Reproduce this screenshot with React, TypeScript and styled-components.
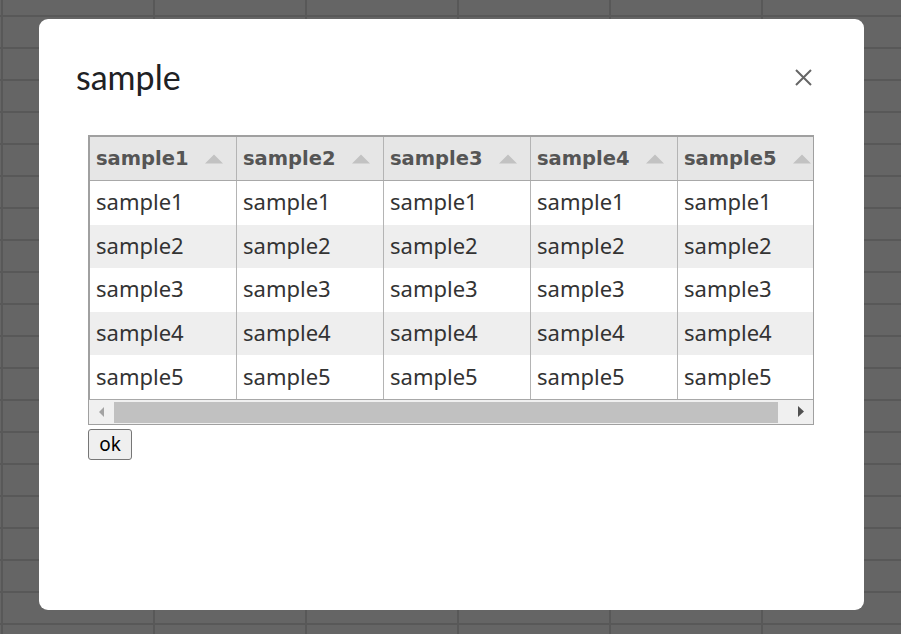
import React from "react";
import styled, { createGlobalStyle } from "styled-components";

const GlobalStyle = createGlobalStyle`
  html, body {
    margin: 0;
    padding: 0;
  }
  body {
    background-color: #656565;
    background-image:
      linear-gradient(to right, #585858 2px, transparent 2px),
      linear-gradient(to bottom, #585858 2px, transparent 2px);
    background-size: 152px 32px;
    background-position: 1px 15px;
    font-family: "Noto Sans", "DejaVu Sans", sans-serif;
  }
`;

const Page = styled.div`
  width: 901px;
  height: 634px;
  box-sizing: border-box;
  padding: 19px 0 0 39px;
`;

const Modal = styled.div`
  width: 825px;
  height: 591px;
  box-sizing: border-box;
  background: #ffffff;
  border-radius: 9px;
  display: flex;
  flex-direction: column;
`;

const Header = styled.div`
  display: flex;
  align-items: center;
  justify-content: space-between;
  padding: 38px 49px 0 37px;
`;

const Title = styled.h2`
  margin: 0;
  font-family: "Lato", "Open Sans", sans-serif;
  font-weight: 400;
  font-size: 34px;
  line-height: 40px;
  color: #202124;
`;

const CloseButton = styled.button`
  width: 24px;
  height: 24px;
  padding: 0;
  border: none;
  background: transparent;
  display: flex;
  align-items: center;
  justify-content: center;
  cursor: pointer;
`;

const Body = styled.div`
  padding: 38px 50px 0 49px;
  display: flex;
  flex-direction: column;
  align-items: flex-start;
`;

const Frame = styled.div`
  width: 100%;
  box-sizing: border-box;
  border: 1px solid #a0a0a0;
  display: flex;
  flex-direction: column;
`;

const Viewport = styled.div`
  overflow: hidden;
  border-bottom: 1px solid #a8a8a8;
`;

const Grid = styled.div`
  width: max-content;
  border-left: 1px solid #a0a0a0;
  border-top: 1px solid #a0a0a0;
`;

const Row = styled.div<{ $alt?: boolean }>`
  display: flex;
  height: 43.6px;
  background: ${(p) => (p.$alt ? "#eeeeee" : "#ffffff")};
`;

const HeadRow = styled.div`
  display: flex;
  height: 43px;
  background: #e6e6e6;
  border-bottom: 1px solid #a8a8a8;
`;

const HeadCell = styled.div`
  border-right: 1px solid #b4b4b4;
  display: flex;
  align-items: center;
  justify-content: space-between;
  padding: 0 13px 0 6px;
  box-sizing: content-box;
  width: 127px;
  font-family: "DejaVu Sans", sans-serif;
  font-weight: 700;
  font-size: 19.5px;
  color: #555555;
`;

const Cell = styled.div`
  width: 140px;
  padding: 0 0 3px 6px;
  border-right: 1px solid #b4b4b4;
  display: flex;
  align-items: center;
  font-family: "Noto Sans", sans-serif;
  font-size: 22px;
  color: #333333;
`;

const Scrollbar = styled.div`
  display: flex;
  height: 24px;
  background: #f0f0f0;
`;

const ScrollArrow = styled.div`
  width: 25px;
  flex: none;
  display: flex;
  align-items: center;
  justify-content: center;
`;

const Track = styled.div`
  flex: 1;
  padding: 2px 0 1px 0;
  display: flex;
`;

const Thumb = styled.div`
  height: 21px;
  background: #c1c1c1;
`;

const OkButton = styled.button`
  margin-top: 4px;
  height: 31px;
  width: 44px;
  padding: 0;
  border: 1px solid #767676;
  border-radius: 3px;
  background: #efefef;
  font-family: "Noto Sans", sans-serif;
  font-size: 19px;
  color: #000000;
`;

const SortIcon = () => (
  <svg width="18" height="10" viewBox="0 0 18 10">
    <polygon points="9,0.5 18,9.5 0,9.5" fill="#c2c2c2" />
  </svg>
);

const columns = ["sample1", "sample2", "sample3", "sample4", "sample5"];
const rows = ["sample1", "sample2", "sample3", "sample4", "sample5"];

export default function App() {
  const thumbPct = (724 / 735) * 100;
  return (
    <>
      <GlobalStyle />
      <Page>
        <Modal>
          <Header>
            <Title>sample</Title>
            <CloseButton aria-label="close">
              <svg width="17" height="17" viewBox="0 0 17 17">
                <path d="M1 1 L16 16 M16 1 L1 16" stroke="#666666" strokeWidth="2" />
              </svg>
            </CloseButton>
          </Header>
          <Body>
            <Frame>
              <Viewport>
                <Grid>
                  <HeadRow>
                    {columns.map((c) => (
                      <HeadCell key={c}>
                        <span>{c}</span>
                        <SortIcon />
                      </HeadCell>
                    ))}
                  </HeadRow>
                  {rows.map((r, i) => (
                    <Row key={r} $alt={i % 2 === 1}>
                      {columns.map((c) => (
                        <Cell key={c}>{r}</Cell>
                      ))}
                    </Row>
                  ))}
                </Grid>
              </Viewport>
              <Scrollbar>
                <ScrollArrow>
                  <svg width="6" height="10" viewBox="0 0 6 10">
                    <polygon points="5,0 5,10 0,5" fill="#a3a3a3" />
                  </svg>
                </ScrollArrow>
                <Track>
                  <Thumb style={{ width: `${thumbPct}%` }} />
                </Track>
                <ScrollArrow>
                  <svg width="6" height="11" viewBox="0 0 6 11">
                    <polygon points="0,0 0,11 6,5.5" fill="#505050" />
                  </svg>
                </ScrollArrow>
              </Scrollbar>
            </Frame>
            <OkButton>ok</OkButton>
          </Body>
        </Modal>
      </Page>
    </>
  );
}
